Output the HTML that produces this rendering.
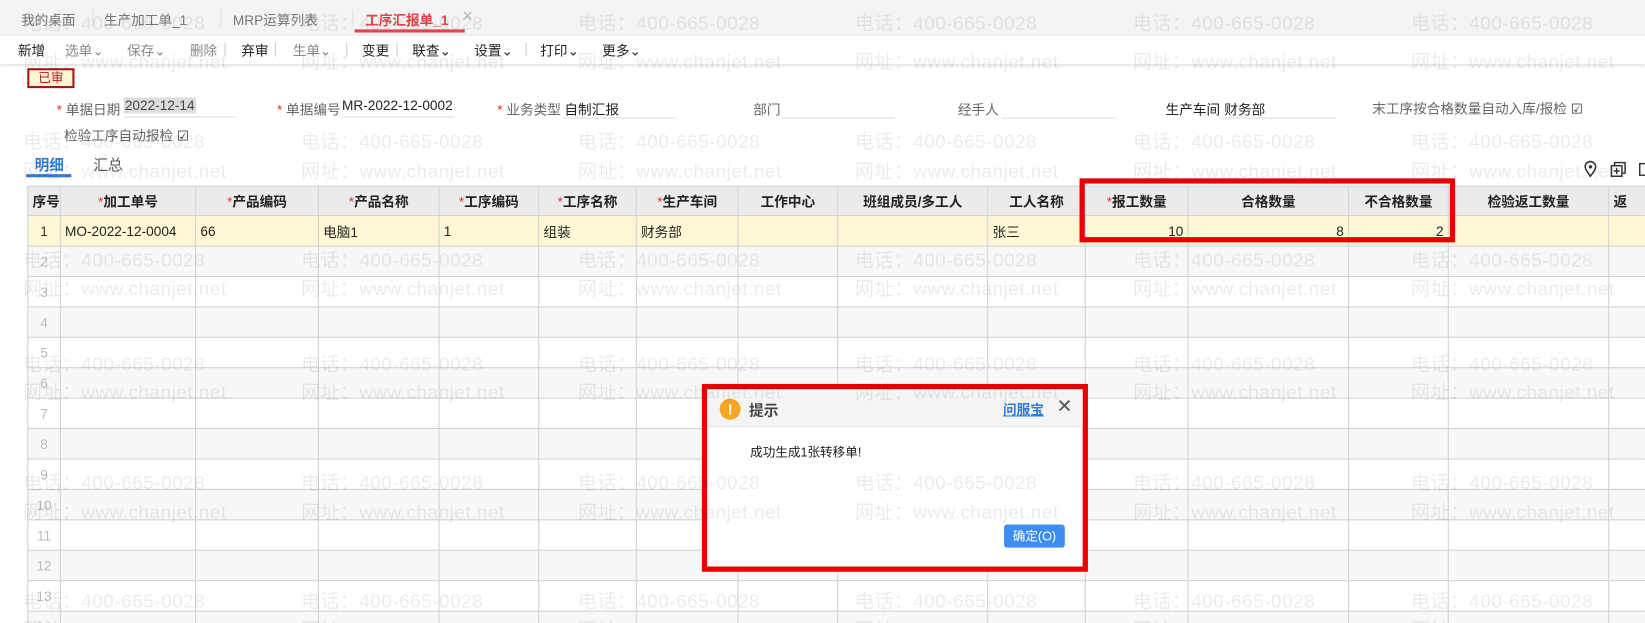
<!DOCTYPE html>
<html><head><meta charset="utf-8">
<style>
*{box-sizing:border-box;margin:0;padding:0}
html,body{width:1645px;height:623px;overflow:hidden;background:#fff}
#wrap{position:absolute;left:0;top:0;width:1568px;height:594px;transform:scale(1.0491);transform-origin:0 0;font-family:"Liberation Sans","Noto Sans CJK SC",sans-serif;font-size:13px;color:#333;overflow:hidden}
.abs{position:absolute}
.tabs{left:0;top:0;width:1568px;height:34px;background:#f4f4f4;border-bottom:1px solid #e4e4e4}
.tab{position:absolute;top:9px;font-size:13px;color:#777}
.sep{position:absolute;top:9px;width:1px;height:16px;background:#ddd}
.tool{left:0;top:34px;width:1568px;height:27px;background:#fff;box-shadow:0 2px 3px rgba(0,0,0,.12)}
.tb{position:absolute;top:4px;font-size:13px;color:#222}
.tb.g{color:#888}
.tsep{position:absolute;top:7px;width:1px;height:13px;background:#ccc}
.lbl{position:absolute;font-size:13px;color:#666}
.req{color:#e33}
.line{position:absolute;height:1px;background:#ddd}
table{position:absolute;left:26px;top:177px;border-collapse:collapse;table-layout:fixed;width:1542px}
td,th{border:1px solid #d0d0d0;height:29px;font-size:13px;padding:0 4px;white-space:nowrap;overflow:hidden}
th{background:#ebebeb;height:28px;font-weight:bold;color:#222}
th i{color:#e33;font-style:normal;font-weight:normal}
tr.r1 td{background:#fff7d6;color:#222}
tr.e td{background:#f8f8f8}
td.n{text-align:center;color:#bbb;padding:0}
tr.r1 td.n{color:#333}
.wm{position:absolute;font-size:18px;letter-spacing:0.5px;color:rgba(0,0,0,.08);z-index:50;pointer-events:none;white-space:nowrap}
</style></head><body><div id="wrap">
<div class="abs tabs">
 <span class="tab" style="left:20px">我的桌面</span><span class="sep" style="left:88px"></span>
 <span class="tab" style="left:99px">生产加工单_1</span><span class="sep" style="left:210px"></span>
 <span class="tab" style="left:222px">MRP运算列表</span><span class="sep" style="left:336px"></span>
 <span class="tab" style="left:348px;color:#e6424c;font-weight:bold">工序汇报单_1</span>
 <span class="tab" style="left:440px;color:#bbb;font-size:14px;top:7px">✕</span>
 <div class="abs" style="left:338px;top:28px;width:105px;height:3px;background:#e6424c"></div>
</div>
<div class="abs tool">
 <span class="tb" style="left:17px">新增</span>
 <span class="tb g" style="left:62px">选单⌄</span>
 <span class="tb g" style="left:121px">保存⌄</span>
 <span class="tb g" style="left:181px">删除</span><span class="tsep" style="left:214px"></span>
 <span class="tb" style="left:230px">弃审</span><span class="tsep" style="left:262px"></span>
 <span class="tb g" style="left:279px">生单⌄</span><span class="tsep" style="left:330px"></span>
 <span class="tb" style="left:345px">变更</span><span class="tsep" style="left:378px"></span>
 <span class="tb" style="left:393px">联查⌄</span>
 <span class="tb" style="left:452px">设置⌄</span><span class="tsep" style="left:501px"></span>
 <span class="tb" style="left:515px">打印⌄</span>
 <span class="tb" style="left:574px">更多⌄</span>
</div>
<div class="abs" style="left:26px;top:65px;width:45px;height:19px;border:2px solid #a01818;background:#fff6d8;color:#c01818;font-size:12px;text-align:center;line-height:15px">已审</div>

<span class="lbl" style="left:54px;top:94px"><span class="req">* </span>单据日期</span>
<span class="abs" style="left:118px;top:93px;background:#ddd;color:#444;padding:0 1px">2022-12-14</span>
<div class="line" style="left:118px;top:111px;width:107px"></div>
<span class="lbl" style="left:264px;top:94px"><span class="req">* </span>单据编号</span>
<span class="abs" style="left:326px;top:93px;color:#222">MR-2022-12-0002</span>
<div class="line" style="left:326px;top:111px;width:107px"></div>
<span class="lbl" style="left:474px;top:94px"><span class="req">* </span>业务类型</span>
<span class="abs" style="left:538px;top:94px;color:#222">自制汇报</span>
<div class="line" style="left:536px;top:112px;width:108px"></div>
<span class="lbl" style="left:718px;top:94px">部门</span>
<div class="line" style="left:745px;top:112px;width:108px"></div>
<span class="lbl" style="left:913px;top:94px">经手人</span>
<div class="line" style="left:955px;top:112px;width:108px"></div>
<span class="lbl" style="left:1111px;top:94px;color:#222">生产车间</span>
<span class="abs" style="left:1167px;top:94px;color:#222">财务部</span>
<div class="line" style="left:1165px;top:112px;width:108px"></div>
<span class="lbl" style="left:1308px;top:93px">末工序按合格数量自动入库/报检 <span style="color:#333">☑</span></span>
<span class="lbl" style="left:61px;top:119px">检验工序自动报检 <span style="color:#333">☑</span></span>

<span class="abs" style="left:33px;top:147px;color:#2f7bd8;font-weight:bold;font-size:14px">明细</span>
<span class="abs" style="left:89px;top:147px;color:#555;font-size:14px">汇总</span>
<div class="abs" style="left:25px;top:166px;width:43px;height:3px;background:#2f7bd8"></div>

<svg class="abs" style="left:1509px;top:153px" width="60" height="18" viewBox="0 0 60 18">
 <path d="M7 15 C3 10 2 8 2 6 A5 5 0 0 1 12 6 C12 8 11 10 7 15Z" fill="none" stroke="#333" stroke-width="1.5"/><circle cx="7" cy="6" r="1.6" fill="#333"/>
 <rect x="30" y="2" width="10" height="10" fill="none" stroke="#333" stroke-width="1.4"/><rect x="27" y="5" width="10" height="10" fill="#fff" stroke="#333" stroke-width="1.4"/><path d="M32 7v6M29 10h6" stroke="#333" stroke-width="1.4"/>
 <rect x="54" y="3" width="10" height="11" fill="none" stroke="#333" stroke-width="1.4"/>
</svg>

<table>
<colgroup><col style="width:31px"><col style="width:129px"><col style="width:117px"><col style="width:115px"><col style="width:95px"><col style="width:93px"><col style="width:97px"><col style="width:95px"><col style="width:143px"><col style="width:93px"><col style="width:98px"><col style="width:153px"><col style="width:95px"><col style="width:153px"><col style="width:35px"></colgroup>
<tr><th>序号</th><th><i>*</i>加工单号</th><th><i>*</i>产品编码</th><th><i>*</i>产品名称</th><th><i>*</i>工序编码</th><th><i>*</i>工序名称</th><th><i>*</i>生产车间</th><th>工作中心</th><th>班组成员/多工人</th><th>工人名称</th><th><i>*</i>报工数量</th><th>合格数量</th><th>不合格数量</th><th>检验返工数量</th><th style="text-align:left">返</th></tr>
<tr class="r1"><td class="n">1</td><td>MO-2022-12-0004</td><td>66</td><td>电脑1</td><td>1</td><td>组装</td><td>财务部</td><td></td><td></td><td>张三</td><td style="text-align:right">10</td><td style="text-align:right">8</td><td style="text-align:right">2</td><td></td><td></td></tr>
<tr class="e"><td class="n">2</td><td></td><td></td><td></td><td></td><td></td><td></td><td></td><td></td><td></td><td></td><td></td><td></td><td></td><td></td></tr>
<tr><td class="n">3</td><td></td><td></td><td></td><td></td><td></td><td></td><td></td><td></td><td></td><td></td><td></td><td></td><td></td><td></td></tr>
<tr class="e"><td class="n">4</td><td></td><td></td><td></td><td></td><td></td><td></td><td></td><td></td><td></td><td></td><td></td><td></td><td></td><td></td></tr>
<tr><td class="n">5</td><td></td><td></td><td></td><td></td><td></td><td></td><td></td><td></td><td></td><td></td><td></td><td></td><td></td><td></td></tr>
<tr class="e"><td class="n">6</td><td></td><td></td><td></td><td></td><td></td><td></td><td></td><td></td><td></td><td></td><td></td><td></td><td></td><td></td></tr>
<tr><td class="n">7</td><td></td><td></td><td></td><td></td><td></td><td></td><td></td><td></td><td></td><td></td><td></td><td></td><td></td><td></td></tr>
<tr class="e"><td class="n">8</td><td></td><td></td><td></td><td></td><td></td><td></td><td></td><td></td><td></td><td></td><td></td><td></td><td></td><td></td></tr>
<tr><td class="n">9</td><td></td><td></td><td></td><td></td><td></td><td></td><td></td><td></td><td></td><td></td><td></td><td></td><td></td><td></td></tr>
<tr class="e"><td class="n">10</td><td></td><td></td><td></td><td></td><td></td><td></td><td></td><td></td><td></td><td></td><td></td><td></td><td></td><td></td></tr>
<tr><td class="n">11</td><td></td><td></td><td></td><td></td><td></td><td></td><td></td><td></td><td></td><td></td><td></td><td></td><td></td><td></td></tr>
<tr class="e"><td class="n">12</td><td></td><td></td><td></td><td></td><td></td><td></td><td></td><td></td><td></td><td></td><td></td><td></td><td></td><td></td></tr>
<tr><td class="n">13</td><td></td><td></td><td></td><td></td><td></td><td></td><td></td><td></td><td></td><td></td><td></td><td></td><td></td><td></td></tr>
<tr class="e"><td class="n">14</td><td></td><td></td><td></td><td></td><td></td><td></td><td></td><td></td><td></td><td></td><td></td><td></td><td></td><td></td></tr>
</table>

<div class="abs" style="left:1029px;top:170px;width:358px;height:61px;border:5px solid #e60000;z-index:20"></div>

<div class="abs" style="left:669px;top:366px;width:368px;height:179px;border:5px solid #e60000;background:#fff;z-index:30">
 <div class="abs" style="left:0;top:2px;width:358px;height:34px;background:#f4f4f4;border-bottom:1px solid #e6e6e6"></div>
 <div class="abs" style="left:12px;top:9px;width:20px;height:20px;border-radius:50%;background:#f5a623;color:#fff;font-weight:bold;text-align:center;line-height:20px;font-size:14px">!</div>
 <span class="abs" style="left:40px;top:10px;font-weight:bold;color:#444;font-size:14px">提示</span>
 <span class="abs" style="left:282px;top:9px;color:#2f7bd8;font-weight:bold;text-decoration:underline;font-size:13px">问服宝</span>
 <span class="abs" style="left:333px;top:6px;color:#555;font-size:18px">✕</span>
 <span class="abs" style="left:41px;top:51px;font-size:12px;color:#222">成功生成1张转移单!</span>
 <div class="abs" style="left:283px;top:129px;width:58px;height:22px;background:#3d8ef0;border-radius:3px;color:#fff;font-size:12px;text-align:center;line-height:22px">确定(O)</div>
</div>

<div id="wms"></div>
</div>
<script>
var h='';var xs=[22,287,551,815,1080,1345];var ys=[[8,45],[121,149],[234,261],[333,360],[446,474],[559,586]];
ys.forEach(function(p){xs.forEach(function(x){h+='<span class="wm" style="left:'+x+'px;top:'+p[0]+'px">电话：400-665-0028</span><span class="wm" style="left:'+x+'px;top:'+p[1]+'px">网址：www.chanjet.net</span>';});});
document.getElementById('wms').innerHTML=h;
</script>
</body></html>
